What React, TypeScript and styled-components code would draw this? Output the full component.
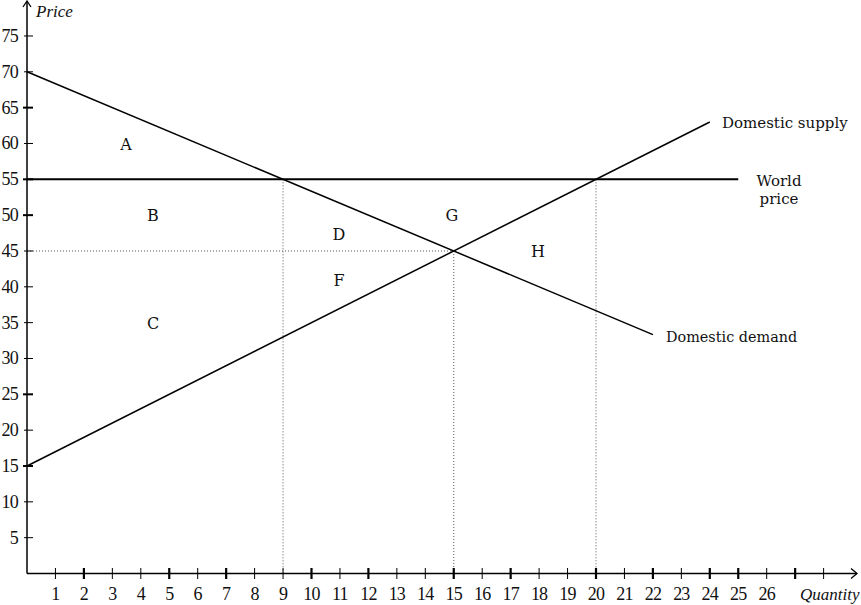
import React from "react";
import styled, { createGlobalStyle } from "styled-components";

const GlobalStyle = createGlobalStyle`
  html, body { margin: 0; padding: 0; background: #ffffff; }
  #root { width: 861px; height: 605px; overflow: hidden; }
`;

const Figure = styled.div`
  width: 861px;
  height: 605px;
  background: #ffffff;
`;

const Chart = styled.svg`
  display: block;
  width: 861px;
  height: 605px;
`;

const TickLabel = styled.text`
  font-family: "Liberation Serif", "Times New Roman", serif;
  font-size: 18px;
  letter-spacing: -0.8px;
  fill: #111;
`;

const AreaLabel = styled.text<{ $size?: number }>`
  font-family: "DejaVu Serif", "Liberation Serif", serif;
  font-size: ${(p) => p.$size ?? 15}px;
  fill: #111;
`;

const AxisTitle = styled.text`
  font-family: "Liberation Serif", "Times New Roman", serif;
  font-style: italic;
  font-size: 17px;
  fill: #111;
`;

const X0 = 27;
const Y0 = 573.5;
const DX = 28.45;
const DY = 7.167;
const px = (q: number) => X0 + q * DX;
const py = (p: number) => Y0 - p * DY;

const yTicks = [5, 10, 15, 20, 25, 30, 35, 40, 45, 50, 55, 60, 65, 70, 75];
const yThick = new Set([65, 55, 50, 25, 15]);
const xThick = new Set([2, 5, 7, 10, 12, 15, 17, 20, 22, 24, 25, 27]);
const xTicks = Array.from({ length: 28 }, (_, i) => i + 1);

const areas: [string, number, number][] = [
  ["A", 126, 144],
  ["B", 153, 215],
  ["C", 153, 323],
  ["D", 339, 234],
  ["F", 339, 280],
  ["G", 452, 215],
  ["H", 538, 251],
];

export default function App() {
  return (
    <Figure>
      <GlobalStyle />
      <Chart viewBox="0 0 861 605">
        {/* dotted guides */}
        <g stroke="#555" strokeWidth={1} strokeDasharray="1 2" fill="none">
          <line x1={px(9)} y1={py(55)} x2={px(9)} y2={Y0} />
          <line x1={px(15)} y1={py(45)} x2={px(15)} y2={Y0} />
          <line x1={px(20)} y1={py(55)} x2={px(20)} y2={Y0} />
          <line x1={X0} y1={py(45)} x2={px(15)} y2={py(45)} />
        </g>

        {/* axes */}
        <g stroke="#000" fill="none">
          <line x1={X0} y1={Y0} x2={X0} y2={1} strokeWidth={1.5} />
          <polyline points={`${X0 - 4},7 ${X0},1 ${X0 + 4},7`} strokeWidth={1.3} />
          <line x1={X0} y1={Y0} x2={857} y2={Y0} strokeWidth={1.5} />
          <polyline points={`851,${Y0 - 5} 857,${Y0} 851,${Y0 + 5}`} strokeWidth={1.3} />
          {yTicks.map((v) => (
            <line
              key={`yt${v}`}
              x1={yThick.has(v) ? 23 : 24}
              y1={py(v)}
              x2={33}
              y2={py(v)}
              strokeWidth={yThick.has(v) ? 2 : 1}
            />
          ))}
          {xTicks.map((v) => (
            <line
              key={`xt${v}`}
              x1={px(v)}
              y1={568}
              x2={px(v)}
              y2={579}
              strokeWidth={xThick.has(v) ? 2.2 : 1}
            />
          ))}
        </g>

        {/* curves */}
        <g stroke="#000" fill="none">
          <line x1={X0} y1={py(70)} x2={px(22)} y2={py(70 - (5 / 3) * 22)} strokeWidth={1.5} />
          <line x1={X0} y1={py(15)} x2={px(24)} y2={py(63)} strokeWidth={1.5} />
          <line x1={X0} y1={py(55)} x2={px(25)} y2={py(55)} strokeWidth={2} />
        </g>

        {/* tick labels */}
        {yTicks.map((v) => (
          <TickLabel key={`yl${v}`} x={18} y={py(v) + 6} textAnchor="end">
            {v}
          </TickLabel>
        ))}
        {xTicks
          .filter((v) => v <= 26)
          .map((v) => (
            <TickLabel key={`xl${v}`} x={px(v)} y={600} textAnchor="middle">
              {v}
            </TickLabel>
          ))}

        <AxisTitle x={36} y={17}>Price</AxisTitle>
        <AxisTitle x={800} y={600}>Quantity</AxisTitle>

        {areas.map(([t, x, y]) => (
          <AreaLabel key={t} $size={16} x={x} y={y + 6} textAnchor="middle">
            {t}
          </AreaLabel>
        ))}

        <AreaLabel x={722} y={128}>Domestic supply</AreaLabel>
        <AreaLabel x={779} y={186} textAnchor="middle">World</AreaLabel>
        <AreaLabel x={779} y={204} textAnchor="middle">price</AreaLabel>
        <AreaLabel x={666} y={342} $size={14.4}>Domestic demand</AreaLabel>
      </Chart>
    </Figure>
  );
}
